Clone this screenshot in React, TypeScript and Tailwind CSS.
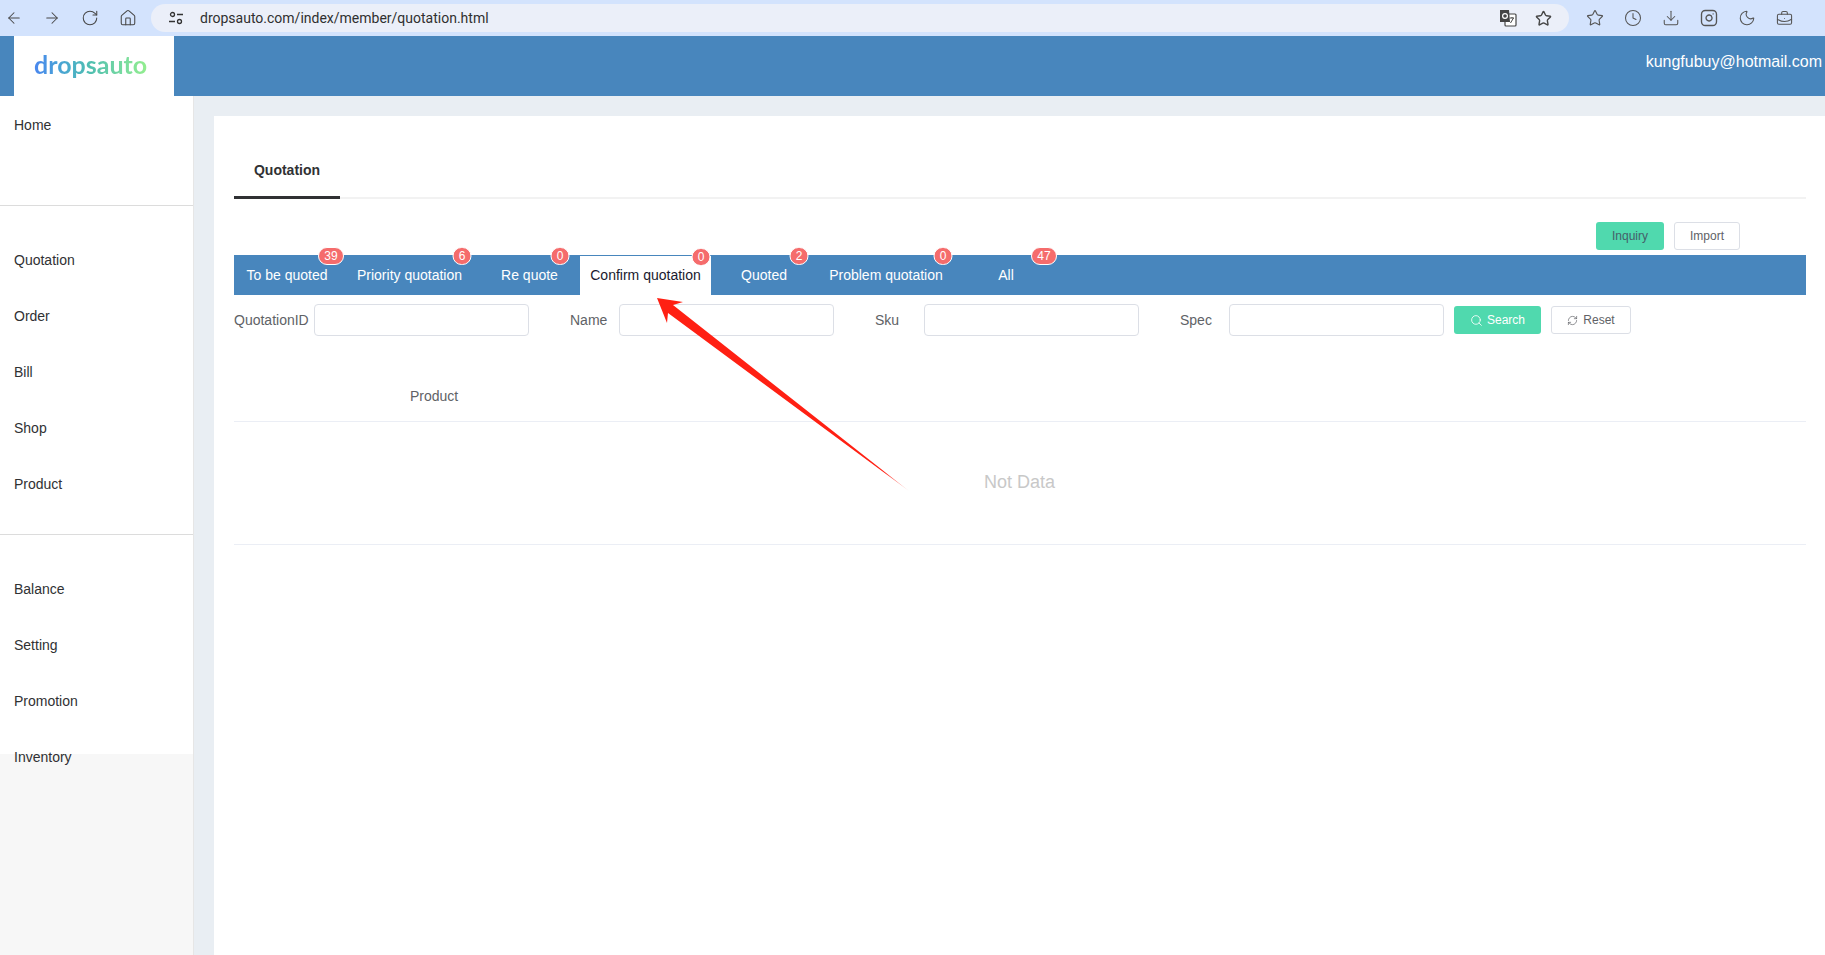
import React from "react";
import { ArrowLeft, ArrowRight, RotateCw, Home, Star, Clock, Download, Instagram, Moon, BriefcaseBusiness, Search, RefreshCw } from "lucide-react";

const tabs = [
  { label: "To be quoted", count: "39", w: "w-[106px]", b: "left-[97px] w-[26px]" },
  { label: "Priority quotation", count: "6", w: "w-[139px]", b: "left-[122px] w-[19px]" },
  { label: "Re quote", count: "0", w: "w-[101px]", b: "left-[81px] w-[19px]" },
  { label: "Confirm quotation", count: "0", w: "w-[131px]", b: "left-[121px] w-[19px]", active: true },
  { label: "Quoted", count: "2", w: "w-[106px]", b: "left-[88px] w-[19px]" },
  { label: "Problem quotation", count: "0", w: "w-[138px]", b: "left-[126px] w-[19px]" },
  { label: "All", count: "47", w: "w-[102px]", b: "left-[89px] w-[26px]" },
];

function NavGroup({ items, className }: { items: string[]; className: string }) {
  return (
    <div className={className}>
      {items.map((t) => (
        <div key={t} className="h-14 flex items-center pl-[14px] text-[14px] text-[#303133]">{t}</div>
      ))}
    </div>
  );
}

function Field({ label, labelW }: { label: string; labelW: string }) {
  return (
    <div className="flex items-center">
      <span className={`${labelW} text-[14px] text-[#606266]`}>{label}</span>
      <div className="w-[215px] h-[32px] border border-[#dcdfe6] rounded-[4px] bg-white" />
    </div>
  );
}

export default function App() {
  return (
    <div className="relative w-[1825px] h-[955px] overflow-hidden flex flex-col font-['Liberation_Sans',Arial,sans-serif] bg-white">
      {/* browser toolbar */}
      <div className="h-9 shrink-0 bg-[#d3e3fd] flex items-center text-[#474747]">
        <div className="flex items-center gap-[20px] pl-[5px]">
          <ArrowLeft size={18} strokeWidth={1.4} />
          <ArrowRight size={18} strokeWidth={1.4} />
          <RotateCw size={18} strokeWidth={1.4} />
          <Home size={18} strokeWidth={1.4} />
        </div>
        <div className="ml-[14px] w-[1418px] h-[28px] rounded-full bg-[#ebeff9] flex items-center pl-[18px] pr-[17px]">
          <svg width="14" height="14" viewBox="0 0 14 14" fill="none" stroke="#333" strokeWidth="1.3">
            <circle cx="3.5" cy="3.5" r="2" />
            <path d="M8 3.5h6M0 10.5h6" />
            <circle cx="10.5" cy="10.5" r="2" />
          </svg>
          <span className="ml-[17px] text-[14px] font-['Roboto',sans-serif] text-[#303030]">dropsauto.com/index/member/quotation.html</span>
          <div className="ml-auto flex items-center gap-[18px]">
            <svg width="18" height="18" viewBox="0 0 18 18">
              <rect x="6" y="5" width="11" height="12" fill="#fff" stroke="#444" strokeWidth="1.2" rx="1" />
              <path d="M1 1h9l1 12H1z" fill="#444" />
              <circle cx="6" cy="7" r="2.4" fill="none" stroke="#fff" strokeWidth="1.2" />
              <path d="M11 9h4M13 8v1M11.5 14l3-5" stroke="#444" strokeWidth="1" fill="none" />
            </svg>
            <Star size={17} strokeWidth={2} />
          </div>
        </div>
        <div className="ml-[17px] flex items-center gap-[20px] text-[#555]">
          <Star size={18} strokeWidth={1.5} />
          <Clock size={18} strokeWidth={1.4} />
          <Download size={18} strokeWidth={1.4} />
          <Instagram size={18} strokeWidth={1.8} />
          <Moon size={18} strokeWidth={1.4} />
          <BriefcaseBusiness size={17} strokeWidth={1.5} />
        </div>
      </div>

      {/* header */}
      <div className="h-[60px] shrink-0 bg-[#4886bd] flex items-start pl-[14px]">
        <div className="w-[160px] h-[60px] bg-white flex items-center pl-[20px] pb-[1px]">
          <span className="text-[25px] font-bold leading-none pb-[3px] font-['Lato',sans-serif] text-transparent bg-clip-text bg-gradient-to-r from-[#4a86ef] via-[#50bfb0] to-[#93ee8e]">dropsauto</span>
        </div>
        <span className="ml-auto mr-[3px] mt-[16px] text-[16px] leading-[20px] text-white">kungfubuy@hotmail.com</span>
      </div>

      {/* body */}
      <div className="flex-1 flex min-h-0">
        <aside className="w-[194px] shrink-0 bg-[#f7f7f7] border-r border-[#e6e6e6]">
          <div className="bg-white h-[658px]">
            <NavGroup items={["Home"]} className="pt-[1px] pb-[52px] border-b border-[#dcdcdc]" />
            <NavGroup items={["Quotation", "Order", "Bill", "Shop", "Product"]} className="pt-[26px] pb-[22px] border-b border-[#dcdcdc]" />
            <NavGroup items={["Balance", "Setting", "Promotion", "Inventory"]} className="pt-[26px]" />
          </div>
        </aside>

        <main className="flex-1 bg-[#e9eef3] pl-[20px] pt-[20px] min-w-0">
          <div className="h-full bg-white pl-[20px] pr-[19px] pt-[42px]">
            {/* page tab */}
            <div className="h-[41px] border-b-2 border-[#f2f2f2] flex">
              <div className="w-[106px] h-[41px] border-b-[3px] border-[#303133] text-center text-[14px] font-bold text-[#303133] leading-[24px]">Quotation</div>
            </div>

            {/* action buttons */}
            <div className="h-[56px] flex items-start justify-end pt-[23px] pr-[66px] gap-[10px]">
              <button className="w-[68px] h-[28px] rounded-[3px] bg-[#50d9ae] text-[12px] text-[#45606a]">Inquiry</button>
              <button className="w-[66px] h-[28px] rounded-[3px] border border-[#dcdfe6] bg-white text-[12px] text-[#606266]">Import</button>
            </div>

            {/* status tabs */}
            <div className="h-[40px] bg-[#4886bd] flex">
              {tabs.map((t) => (
                <div
                  key={t.label}
                  className={`relative ${t.w} flex items-center justify-center text-[14px] ${t.active ? "bg-white text-[#1a1a2e] mt-[1px]" : "text-white"}`}
                >
                  {t.label}
                  <span className={`absolute -top-[8px] ${t.b} -translate-x-1/2 h-[18px] rounded-full bg-[#f56c6c] border border-white text-white text-[12px] leading-[16px] text-center`}>
                    {t.count}
                  </span>
                </div>
              ))}
            </div>

            {/* filter row */}
            <div className="flex items-center mt-[9px]">
              <Field label="QuotationID" labelW="w-[80px]" />
              <div className="ml-[41px]"><Field label="Name" labelW="w-[49px]" /></div>
              <div className="ml-[41px]"><Field label="Sku" labelW="w-[49px]" /></div>
              <div className="ml-[41px]"><Field label="Spec" labelW="w-[49px]" /></div>
              <button className="ml-[10px] w-[87px] h-[28px] rounded-[3px] bg-[#50d9ae] text-white text-[12px] flex items-center justify-center gap-[4px]">
                <Search size={13} strokeWidth={1.5} />Search
              </button>
              <button className="ml-[10px] w-[80px] h-[28px] rounded-[3px] border border-[#dcdfe6] bg-white text-[#606266] text-[12px] flex items-center justify-center gap-[5px]">
                <RefreshCw size={11} strokeWidth={1.5} />Reset
              </button>
            </div>

            {/* table */}
            <div className="mt-[34px] h-[52px] border-b border-[#ebeef5] flex items-center pl-[176px] text-[14px] text-[#606266] pt-[2px]">Product</div>
            <div className="h-[123px] border-b border-[#ebeef5] flex items-center justify-center text-[18px] text-[#c8c8c8] pb-[2px]">
              <span className="ml-[-1px]">Not Data</span>
            </div>
          </div>
        </main>
      </div>

      {/* annotation arrow */}
      <svg className="absolute left-0 top-0 pointer-events-none" width="1825" height="955" viewBox="0 0 1825 955">
        <defs>
          <linearGradient id="tail" x1="657" y1="298" x2="909" y2="491" gradientUnits="userSpaceOnUse">
            <stop offset="0.9" stopColor="#ff2013" />
            <stop offset="1" stopColor="#ff2013" stopOpacity="0.2" />
          </linearGradient>
        </defs>
        <polygon points="657,298 683,302 673,305 909,491 668,313 667,323" fill="url(#tail)" />
      </svg>
    </div>
  );
}
